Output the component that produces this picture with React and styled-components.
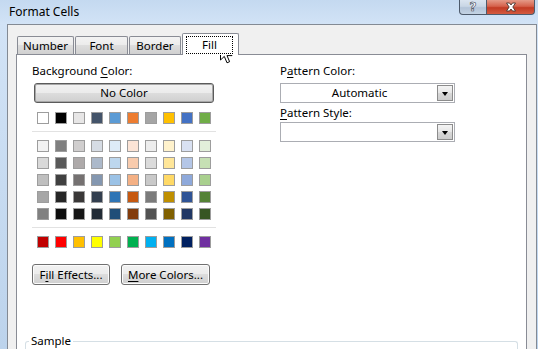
import React from 'react';
import styled, { createGlobalStyle } from 'styled-components';

const GlobalStyle = createGlobalStyle`
  html, body {
    margin: 0;
    padding: 0;
  }
  body {
    width: 538px;
    height: 349px;
    overflow: hidden;
    font-family: "Noto Sans", "Segoe UI", sans-serif;
    font-size: 11.5px;
    color: #000;
  }
`;

const themeRow = ['#FFFFFF', '#000000', '#E7E6E6', '#44546A', '#5B9BD5', '#ED7D31', '#A5A5A5', '#FFC000', '#4472C4', '#70AD47'];

const tintRows = [
  ['#F2F2F2', '#7F7F7F', '#D0CECE', '#D6DCE4', '#DDEBF7', '#FCE4D6', '#EDEDED', '#FFF2CC', '#D9E1F2', '#E2EFDA'],
  ['#D9D9D9', '#595959', '#AEAAAA', '#ACB9CA', '#BDD7EE', '#F8CBAD', '#DBDBDB', '#FFE699', '#B4C6E7', '#C6E0B4'],
  ['#BFBFBF', '#404040', '#757171', '#8497B0', '#9BC2E6', '#F4B084', '#C9C9C9', '#FFD966', '#8EA9DB', '#A9D08E'],
  ['#A6A6A6', '#262626', '#3A3838', '#333F4F', '#2F75B5', '#C65911', '#7B7B7B', '#BF8F00', '#305496', '#548235'],
  ['#808080', '#0D0D0D', '#161616', '#222B35', '#1F4E78', '#833C0C', '#525252', '#806000', '#203764', '#375623'],
];

const standardRow = ['#C00000', '#FF0000', '#FFC000', '#FFFF00', '#92D050', '#00B050', '#00B0F0', '#0070C0', '#002060', '#7030A0'];

const tabs = [
  { label: 'Number', width: 57, gap: 1 },
  { label: 'Font', width: 53, gap: 1 },
  { label: 'Border', width: 52, gap: 1 },
];

const Frame = styled.div`
  position: relative;
  width: 538px;
  height: 349px;
  display: flex;
  flex-direction: column;
  background: linear-gradient(180deg, #c4d9f0 0%, #d2e3f6 24px, #bcd3ec 100%);
  overflow: hidden;
`;

const TitleBar = styled.div`
  height: 24px;
  flex: none;
  display: flex;
  align-items: flex-start;
  padding-left: 9px;
  padding-right: 3px;
`;

const Title = styled.div`
  padding-top: 4px;
  font-size: 12px;
  line-height: 16px;
`;

const CaptionButtons = styled.div`
  margin-left: auto;
  display: flex;
`;

const CaptionButton = styled.div`
  width: ${p => p.$w}px;
  height: 15px;
  box-sizing: border-box;
  display: flex;
  align-items: center;
  justify-content: center;
  border: 1px solid #4d5a6b;
  border-top: none;
  background: ${p => p.$close
    ? 'linear-gradient(180deg, #e59a88 0%, #d5614b 45%, #c23b24 55%, #d35a40 100%)'
    : 'linear-gradient(180deg, #dae4ef 0%, #c9d6e5 45%, #b3c4d8 55%, #c4d3e4 100%)'};
  border-radius: ${p => p.$close ? '0 0 4px 0' : '0 0 0 4px'};
  ${p => p.$close && 'border-left: none;'}
`;

const HelpGlyph = styled.span`
  font-family: "DejaVu Sans", sans-serif;
  font-weight: bold;
  font-size: 12px;
  line-height: 12px;
  color: #fff;
  -webkit-text-stroke: 0.6px #3c4655;
  margin-top: -1px;
`;

const Client = styled.div`
  flex: 1;
  display: flex;
  flex-direction: column;
  margin: 0 1px 0 7px;
  border: 1px solid #838a94;
  border-bottom: none;
  background: #f0f0f0;
  padding: 8px 9px 0 8px;
  min-height: 0;
`;

const TabStrip = styled.div`
  display: flex;
  align-items: flex-end;
  height: 21px;
  flex: none;
`;

const Tab = styled.div`
  box-sizing: border-box;
  width: ${p => p.$w}px;
  margin-left: ${p => p.$gap}px;
  height: 18px;
  border: 1px solid #898c95;
  border-bottom: none;
  border-radius: 2px 2px 0 0;
  background: linear-gradient(180deg, #f3f3f3 0%, #ebebeb 50%, #dddddd 50%, #d0d0d0 100%);
  display: flex;
  align-items: center;
  justify-content: center;
  line-height: 16px;
  padding-top: 1px;
`;

const ActiveTab = styled.div`
  position: relative;
  z-index: 1;
  box-sizing: border-box;
  width: ${p => p.$w}px;
  margin-left: ${p => p.$gap}px;
  height: 22px;
  margin-bottom: -1px;
  border: 1px solid #898c95;
  border-bottom: none;
  border-radius: 2px 2px 0 0;
  background: #fff;
  padding: 2px 5px 1px 3px;
  display: flex;
`;

const FocusBox = styled.div`
  flex: 1;
  border: 1px dotted #000;
  display: flex;
  align-items: center;
  justify-content: center;
  line-height: 16px;
`;

const Panel = styled.div`
  flex: 1;
  background: #fff;
  border: 1px solid #898c95;
  border-bottom: none;
  padding: 8px 8px 0 8px;
`;

const Columns = styled.div`
  display: flex;
  gap: 64px;
  padding-left: 7px;
`;

const Column = styled.div`
  width: ${p => p.$w}px;
  display: flex;
  flex-direction: column;
`;

const Label = styled.div`
  height: 16px;
  line-height: 16px;
  margin-top: ${p => p.$mt || 0}px;
  white-space: nowrap;
`;

const Key = styled.span`
  text-decoration: underline;
  text-underline-offset: 2px;
`;

const PushButton = styled.div`
  box-sizing: border-box;
  width: ${p => p.$w}px;
  height: ${p => p.$h}px;
  margin-left: ${p => p.$ml || 0}px;
  border: 1px solid ${p => p.$default ? '#5b5b5b' : '#707070'};
  border-radius: 3px;
  background: linear-gradient(180deg, #f2f2f2 0%, #ebebeb 50%, #dddddd 50%, #cfcfcf 100%);
  box-shadow: inset 0 0 0 1px ${p => p.$default ? '#a8a8a8' : '#fcfcfc'};
  display: flex;
  align-items: center;
  justify-content: center;
  line-height: 16px;
  white-space: nowrap;
`;

const NoColorButton = styled(PushButton)`
  margin-top: 4px;
`;

const SwatchRow = styled.div`
  display: flex;
  gap: 6px;
  padding-left: 5px;
  margin-top: ${p => p.$mt || 0}px;
`;

const SwatchGrid = styled.div`
  display: flex;
  flex-direction: column;
  gap: 5px;
  margin-top: 8px;
`;

const Swatch = styled.div`
  width: 12px;
  height: 12px;
  box-sizing: border-box;
  border: 1px solid #9d9d9d;
  background: ${p => p.$c};
`;

const Separator = styled.div`
  height: 1px;
  background: #e2e2e2;
  margin-top: 7px;
`;

const ButtonRow = styled.div`
  display: flex;
  gap: 11px;
  margin-top: 16px;
`;

const Combo = styled.div`
  box-sizing: border-box;
  height: 20px;
  margin-top: ${p => p.$mt || 0}px;
  border: 1px solid #abadb3;
  background: #fff;
  display: flex;
  align-items: stretch;
  padding: 1px;
`;

const ComboText = styled.div`
  flex: 1;
  display: flex;
  align-items: center;
  justify-content: center;
  line-height: 16px;
`;

const ComboArrow = styled.div`
  width: 16px;
  box-sizing: border-box;
  border: 1px solid #8c8c8c;
  background: linear-gradient(180deg, #f4f4f4 0%, #e6e6e6 50%, #d8d8d8 50%, #cdcdcd 100%);
  display: flex;
  align-items: center;
  justify-content: center;
`;

const Triangle = styled.div`
  width: 0;
  height: 0;
  border-left: 3.5px solid transparent;
  border-right: 3.5px solid transparent;
  border-top: 4px solid #000;
  margin-top: 1px;
`;

const Group = styled.fieldset`
  margin: 48px 0 0 0;
  padding: 0;
  height: 40px;
  border: 1px solid #d5dfe5;
  border-radius: 3px;
  border-bottom: none;
`;

const GroupLegend = styled.legend`
  margin-left: 3px;
  padding: 0 2px;
  line-height: 16px;
`;

const Cursor = styled.svg`
  position: absolute;
  left: 219px;
  top: 42px;
`;

function CloseIcon() {
  return (
    <svg width="12" height="10" viewBox="0 0 12 10">
      <path
        d="M1.5 1 L4.5 1 L6 3 L7.5 1 L10.5 1 L7.8 5 L10.5 9 L7.5 9 L6 7 L4.5 9 L1.5 9 L4.2 5 Z"
        fill="#fff"
        stroke="#4a3530"
        strokeWidth="0.9"
        strokeLinejoin="round"
      />
    </svg>
  );
}

function Dropdown({ text, mt }) {
  return (
    <Combo $mt={mt}>
      <ComboText>{text}</ComboText>
      <ComboArrow>
        <Triangle />
      </ComboArrow>
    </Combo>
  );
}

export default function App() {
  return (
    <Frame>
      <GlobalStyle />
      <TitleBar>
        <Title>Format Cells</Title>
        <CaptionButtons>
          <CaptionButton $w={28}>
            <HelpGlyph>?</HelpGlyph>
          </CaptionButton>
          <CaptionButton $w={48} $close>
            <CloseIcon />
          </CaptionButton>
        </CaptionButtons>
      </TitleBar>
      <Client>
        <TabStrip>
          {tabs.map(t => (
            <Tab key={t.label} $w={t.width} $gap={t.gap}>{t.label}</Tab>
          ))}
          <ActiveTab $w={57} $gap={1}>
            <FocusBox>Fill</FocusBox>
          </ActiveTab>
        </TabStrip>
        <Panel>
          <Columns>
            <Column $w={184}>
              <Label>Background <Key>C</Key>olor:</Label>
              <NoColorButton $w={180} $h={20} $ml={2} $default>No Color</NoColorButton>
              <SwatchRow $mt={9}>
                {themeRow.map((c, i) => <Swatch key={i} $c={c} />)}
              </SwatchRow>
              <Separator />
              <SwatchGrid>
                {tintRows.map((row, r) => (
                  <SwatchRow key={r}>
                    {row.map((c, i) => <Swatch key={i} $c={c} />)}
                  </SwatchRow>
                ))}
              </SwatchGrid>
              <Separator />
              <SwatchRow $mt={8}>
                {standardRow.map((c, i) => <Swatch key={i} $c={c} />)}
              </SwatchRow>
              <ButtonRow>
                <PushButton $w={78} $h={21}>F<Key>i</Key>ll Effects...</PushButton>
                <PushButton $w={89} $h={21}><Key>M</Key>ore Colors...</PushButton>
              </ButtonRow>
            </Column>
            <Column $w={175}>
              <Label>P<Key>a</Key>ttern Color:</Label>
              <Dropdown text="Automatic" mt={4} />
              <Label $mt={2}><Key>P</Key>attern Style:</Label>
              <Dropdown text="" mt={1} />
            </Column>
          </Columns>
          <Group>
            <GroupLegend>Sample</GroupLegend>
          </Group>
        </Panel>
      </Client>
      <Cursor width="14" height="23" viewBox="0 0 14 23">
        <path
          d="M1.5 1.5 L1.5 18 L5.3 14.4 L8 20.8 L10.6 19.7 L8 13.6 L13 13.6 Z"
          fill="#fff"
          stroke="#000"
          strokeWidth="1"
          strokeLinejoin="miter"
        />
      </Cursor>
    </Frame>
  );
}
